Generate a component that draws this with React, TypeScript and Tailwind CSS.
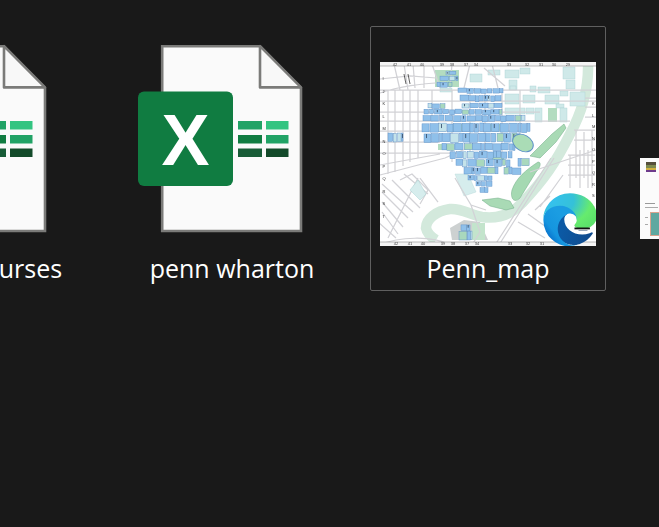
import React from "react";

function ExcelDoc() {
  return (
    <svg viewBox="115 27 234 210" className="w-[234px] h-[210px] shrink-0">
      <path d="M162.2 46.2H260L301 88V231H162.2Z" fill="#fafafa" stroke="#7b7b79" strokeWidth="2.6" />
      <path d="M260 46.2V87.4H301Z" fill="#f8f8f8" stroke="#7b7b79" strokeWidth="2.6" strokeLinejoin="round" />
      <rect x="238" y="121" width="24" height="8.5" fill="#21a366" />
      <rect x="266" y="121" width="22.5" height="8.5" fill="#33c481" />
      <rect x="238" y="135" width="24" height="8.5" fill="#107c41" />
      <rect x="266" y="135" width="22.5" height="8.5" fill="#21a366" />
      <rect x="238" y="148.5" width="24" height="8.5" fill="#185c37" />
      <rect x="266" y="148.5" width="22.5" height="8.5" fill="#134a2a" />
      <rect x="138" y="91.5" width="95" height="94.5" rx="6" fill="#107c41" />
      <text x="185.5" y="165" textAnchor="middle" fill="#fff" fontSize="72" fontWeight="700" fontFamily="'Liberation Sans', sans-serif">X</text>
    </svg>
  );
}

function makeRng(seed: number) {
  let s = seed;
  return () => {
    s = (s * 16807) % 2147483647;
    return (s - 1) / 2147483646;
  };
}

const rows: [number, number, number, number][] = [
  [66, 9, 78, 13],
  [60, 14, 78, 19],
  [57, 20, 72, 25],
  [78, 26, 123, 31],
  [80, 33, 122, 39],
  [48, 41, 65, 46],
  [82, 41, 122, 46],
  [44, 47, 122, 52],
  [43, 53, 145, 59],
  [42, 61, 150, 70],
  [44, 71, 140, 80],
  [62, 81, 135, 88],
  [70, 89, 132, 96],
  [76, 97, 130, 104],
  [84, 105, 118, 112],
  [124, 105, 142, 112],
  [138, 96, 150, 104],
  [88, 113, 112, 118],
  [96, 119, 112, 124],
  [100, 125, 108, 130],
  [8, 71, 23, 80],
  [81, 162, 90, 168],
  [79, 169, 92, 178],
];

const roads = [
  "M0 17L30 14L56 16", "M0 28H216", "M0 39H216", "M0 50H160", "M0 59H190", "M0 69H140", "M0 80H60", "M0 91H70",
  "M14 2L20 28M24 2L28 28M33 2L35 26M44 2V26M52 2L60 26M72 2L70 26M90 2L84 26M104 6L125 24M112 2L118 26",
  "M8 28V112M15 28V110M23 28V104M30 28V100M38 28V96M52 28V60M72 28V100M90 28V90M105 28V90M122 28V96M140 28V80",
  "M0 31C20 24 40 22 66 20", "M0 113L65 96L90 85", "M0 103L60 92", "M38 116L8 176", "M2 122L33 150M2 130L28 156M2 140L23 165M2 150L18 172M24 112L48 132",
  "M12 118L40 146M-2 160L16 176",
  "M-2 183C20 175 50 173 71 183", "M75 116L91 143L106 148", "M40 116L58 140", "M20 118L32 112L48 128L40 142",
  "M171 96L115 183", "M174 96L119 183", "M160 145L183 113", "M138 160L165 176", "M148 152L176 172", "M155 148L170 134",
  "M188 93H215M188 103H215M188 113H215M190 93V126M200 88V126M208 88V126M194 68H215M194 78H215M196 68V116M204 70V116M212 68V126",
  "M91 143L100 170L92 183", "M150 110L216 88", "M120 183H216", "M205 36H216M205 45H216M205 55H216",
];

const teal: [number, number, number, number][] = [
  [125, 8, 14, 8], [129, 18, 8, 10], [140, 6, 10, 6], [125, 32, 14, 10], [143, 33, 12, 8], [158, 25, 12, 6],
  [165, 33, 14, 9], [183, 5, 12, 12], [186, 18, 9, 9], [190, 30, 15, 14], [180, 29, 8, 5], [125, 46, 20, 6], [146, 46, 8, 6],
  [90, 12, 12, 8], [108, 8, 12, 5], [60, 26, 12, 4], [150, 24, 6, 6], [130, 24, 6, 4], [176, 42, 8, 4],
  [155, 46, 7, 14], [180, 46, 7, 14],
];

const green: [number, number, number, number][] = [
  [55, 8, 24, 17], [168, 46, 9, 14], [72, 62, 10, 8], [108, 62, 14, 8], [84, 72, 10, 8], [112, 90, 12, 8], [58, 82, 10, 6],
];

const tops = ["42", "41", "40", "39", "38", "37", "34", "33", "32", "31", "30", "29"];
const topX = [15, 29, 42, 62, 72, 86, 96, 129, 147, 161, 174, 188];
const sides = ["I", "J", "K", "L", "M", "N", "O", "P", "Q", "R", "S", "T"];

function CampusMap() {
  const rnd = makeRng(77);
  const buildings: React.ReactNode[] = [];
  let key = 0;
  rows.forEach(([x1, y1, x2, y2]) => {
    let x = x1;
    while (x < x2 - 1) {
      const w = Math.min(2.5 + rnd() * 6, x2 - x);
      const r = rnd();
      const fill = r < 0.1 ? "#a9d8bd" : r < 0.18 ? "#c4e3ea" : "#8fc0ea";
      buildings.push(
        <rect key={key++} x={x} y={y1 + rnd() * 1} width={w} height={y2 - y1 - rnd()} fill={fill} stroke="#5d91c8" strokeWidth="0.45" />
      );
      if (rnd() < 0.16) {
        buildings.push(<rect key={key++} x={x + w * 0.3} y={y1 + 1} width="0.9" height={(y2 - y1) * 0.45} fill="#3c5470" />);
      }
      x += w + 0.2 + rnd() * 1.1;
    }
  });
  return (
    <svg viewBox="0 0 216 184" className="w-[216px] h-[184px] shrink-0">
      <defs>
        <filter id="soft" x="-5%" y="-5%" width="110%" height="110%">
          <feGaussianBlur stdDeviation="0.42" />
        </filter>
        <linearGradient id="edgeA" x1="0.1" y1="0.7" x2="1" y2="0.9">
          <stop offset="0" stopColor="#0c59a4" />
          <stop offset="1" stopColor="#114a8b" />
        </linearGradient>
        <linearGradient id="edgeB" x1="0.6" y1="0.4" x2="0.12" y2="0.85">
          <stop offset="0" stopColor="#1b9de2" />
          <stop offset="0.6" stopColor="#1595df" />
          <stop offset="1" stopColor="#0668c6" />
        </linearGradient>
        <radialGradient id="edgeC" cx="0.1" cy="0.2" r="1.05">
          <stop offset="0" stopColor="#35c1f1" />
          <stop offset="0.45" stopColor="#35c1d8" />
          <stop offset="0.75" stopColor="#66eb6e" />
          <stop offset="1" stopColor="#5be06a" />
        </radialGradient>
      </defs>
      <rect width="216" height="184" fill="#fff" />
      <g filter="url(#soft)">
        <path d="M208 0C209 26 202 50 190 72C176 100 164 118 142 141C132 152 118 157 102 155C90 153 82 146 70 147C56 149 46 157 46 166C47 171 51 175 56 178" fill="none" stroke="#d3e9dc" strokeWidth="10.5" />
        {teal.map(([x, y, w, h], i) => (
          <rect key={i} x={x} y={y} width={w} height={h} fill="#cfe9e9" stroke="#a9cfd2" strokeWidth="0.4" />
        ))}
        <path d="M75 112L88 112L96 130L84 134Z" fill="#d6eded" stroke="#b0d4d4" strokeWidth="0.4" />
        <path d="M70 166L84 158L100 160L108 178H72Z" fill="#cdd1d1" />
        <rect x="92" y="161" width="13" height="17" fill="#c3e4cc" />
        <path d="M102 138L118 136L130 139L134 146L126 148L110 144Z" fill="#a9dab5" stroke="#6eab84" strokeWidth="0.5" />
        <path d="M132 128C136 116 146 108 158 100C162 100 160 106 156 110L140 136C134 142 130 136 132 128Z" fill="#a5d9b2" stroke="#6eab84" strokeWidth="0.5" />
        <path d="M150 94L172 72L184 62L186 66L176 80L160 96Z" fill="#a9dab5" stroke="#6eab84" strokeWidth="0.5" />
        {green.map(([x, y, w, h], i) => (
          <rect key={i} x={x} y={y} width={w} height={h} fill="#b3dcc0" />
        ))}
        <path d={roads.join(" ")} fill="none" stroke="#d2d2d6" strokeWidth="1.25" />
        <path d="M30 128L38 118L46 132L40 138Z" fill="#d6eded" stroke="#9cc" strokeWidth="0.4" />
        {buildings}
        <ellipse cx="143" cy="81" rx="11" ry="8" fill="#aadcb6" stroke="#5d91c8" strokeWidth="0.9" transform="rotate(30 143 81)" />
        <path d="M24 12L26 22M28 12L30 22" stroke="#222" strokeWidth="0.7" />
        <rect x="0" y="0" width="216" height="4" fill="#f4f4f4" />
        <rect x="0" y="180" width="216" height="4" fill="#f4f4f4" />
        <path d="M0 4H216M0 180H216" stroke="#8a8a8a" strokeWidth="0.6" />
        {tops.map((t, i) => (
          <text key={i} x={topX[i]} y="4" fontSize="4" textAnchor="middle" fill="#444" fontFamily="'Liberation Sans', sans-serif">{t}</text>
        ))}
        {tops.slice(0, 10).map((t, i) => (
          <text key={i} x={topX[i] + 1} y="183" fontSize="4" textAnchor="middle" fill="#444" fontFamily="'Liberation Sans', sans-serif">{t}</text>
        ))}
        {sides.map((t, i) => (
          <text key={i} x="2.5" y={18 + i * 12.5} fontSize="4" fill="#333" fontFamily="'Liberation Sans', sans-serif">{t}</text>
        ))}
        {sides.slice(2).map((t, i) => (
          <text key={i} x="212" y={43 + i * 11.5} fontSize="4" fill="#333" fontFamily="'Liberation Sans', sans-serif">{t}</text>
        ))}
      </g>
      <g transform="translate(164 132) scale(0.2031)">
        <path d="M235 188.4a94 94 0 0 1-10.6 4.7 102.2 102.2 0 0 1-36 6.5c-47.4 0-88.7-32.6-88.7-74.4 0-11.8 6.8-22 16.6-27.6-42.9 1.8-53.9 46.5-53.9 72.7 0 74 68.2 81.5 82.9 81.5 7.9 0 19.9-2.3 27-4.6l1.3-.4a128.6 128.6 0 0 0 66.7-52.9c1.4-2.1-1-4.5-3.3-3.5Z" fill="url(#edgeA)" />
        <path d="M106 241.3a79.6 79.6 0 0 1-22.8-21.4 81 81 0 0 1 29.6-120.4c3.2-1.5 8.7-4.2 16-4.1a33.3 33.3 0 0 1 26.4 13.4 32.8 32.8 0 0 1 6.6 19.2c0-.2 25.2-82-82.4-82C34.2 45.9-3 88.8-3 126.5a134 134 0 0 0 12.5 57.7 128.4 128.4 0 0 0 156.8 67.3 75.8 75.8 0 0 1-60.3-10.2Z" fill="url(#edgeB)" />
        <path d="M152.9 148.9c-.8 1.1-3.4 2.6-3.4 5.9 0 2.7 1.8 5.3 4.9 7.5 14.8 10.3 42.7 8.9 42.8 8.9a61.4 61.4 0 0 0 31.2-8.6A63.2 63.2 0 0 0 260 108.4c.3-23.1-8.2-38.5-11.7-45.2C226.4 20.4 179.3-4 128-4 55.8-4-3 54-4 126.2c.5-37.7 38-68 82.4-68 3.6 0 24.2.3 43.3 10.4 16.9 8.8 25.7 19.5 31.8 30.1 6.4 11 7.5 24.9 7.5 30.4s-2.8 13.8-8.8 20.3Z" fill="url(#edgeC)" />
        <rect x="150" y="165" width="76" height="9" fill="#111" />
        <rect x="170" y="177" width="44" height="4" fill="#7c8fa8" />
      </g>
    </svg>
  );
}

function Thumb() {
  return (
    <svg viewBox="0 0 208 81" className="w-[208px] h-[81px] mt-[131px] ml-[13px] self-start shrink-0">
      <defs>
        <filter id="soft2">
          <feGaussianBlur stdDeviation="0.5" />
        </filter>
      </defs>
      <rect width="208" height="81" fill="#fbfbfb" />
      <g filter="url(#soft2)">
        <rect x="6" y="4" width="10" height="3" fill="#55503a" />
        <rect x="6" y="7" width="10" height="3" fill="#7d8a50" />
        <rect x="6" y="10" width="10" height="2" fill="#d0b040" />
        <rect x="6" y="12" width="10" height="2" fill="#6d3a8c" />
        <rect x="5" y="45" width="10" height="1" fill="#999" />
        <rect x="5" y="49" width="13" height="1" fill="#aaa" />
        <rect x="5" y="59" width="3" height="1" fill="#aaa" />
        <rect x="5" y="66" width="3" height="1" fill="#aaa" />
        <rect x="10" y="54" width="14" height="24" fill="#d9a48e" />
        <rect x="11" y="55" width="12" height="22" fill="#5fa8a0" />
      </g>
    </svg>
  );
}

function Tile({ label, selected, children }: { label?: string; selected?: boolean; children: React.ReactNode }) {
  return (
    <div
      className={
        selected
          ? "w-[236px] h-[265px] shrink-0 flex flex-col items-center border border-[#5f5f5f] rounded-[2px]"
          : "w-[236px] h-[265px] shrink-0 flex flex-col items-center border border-transparent"
      }
    >
      {children}
      {label && <div className="text-white text-[25px] leading-[32px] whitespace-nowrap">{label}</div>}
    </div>
  );
}

export default function App() {
  return (
    <div className="w-[659px] h-[527px] overflow-hidden bg-[#191919] pt-[26px] font-['Open_Sans','Noto_Sans',sans-serif]">
      <div className="flex gap-[20px] -ml-[142px] w-[1100px]">
        <Tile label="upenn courses">
          <ExcelDoc />
          <div className="h-[15px]" />
        </Tile>
        <Tile label="penn wharton">
          <ExcelDoc />
          <div className="h-[15px]" />
        </Tile>
        <Tile label="Penn_map" selected>
          <div className="h-[35px]" />
          <CampusMap />
          <div className="h-[6px]" />
        </Tile>
        <Tile>
          <Thumb />
        </Tile>
      </div>
    </div>
  );
}
